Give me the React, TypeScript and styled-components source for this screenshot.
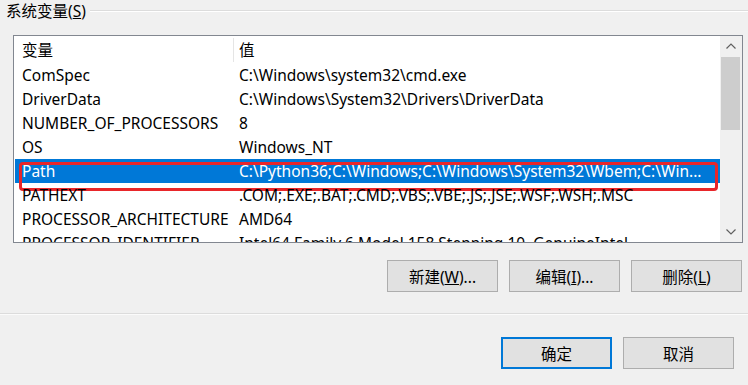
import React from 'react';
import styled, { createGlobalStyle } from 'styled-components';

const GlobalStyle = createGlobalStyle`
    html, body {
        margin: 0;
        padding: 0;
        background: #f0f0f0;
    }
    body {
        width: 748px;
        height: 385px;
        overflow: hidden;
        font-family: 'Noto Sans', 'Noto Sans CJK SC', sans-serif;
        font-size: 15.5px;
        color: #000;
    }
`;

const Dialog = styled.div`
    display: flex;
    flex-direction: column;
    width: 748px;
    height: 385px;
`;

const GroupHeader = styled.div`
    display: flex;
    align-items: center;
    height: 22px;
    padding-left: 6px;
    gap: 4px;
`;

const GroupLabel = styled.span`
    line-height: 22px;
`;

const GroupLine = styled.div`
    flex: 1;
    height: 0;
    border-top: 1px solid #dcdcdc;
    border-bottom: 1px solid #ffffff;
`;

const ListBox = styled.div`
    display: grid;
    grid-template-columns: 1fr 22px;
    margin: 13px 0 0 13px;
    width: 728px;
    height: 206px;
    border: 1px solid #828790;
    background: #fff;
    overflow: hidden;
`;

const Rows = styled.div`
    display: flex;
    flex-direction: column;
    overflow: hidden;
    padding-left: 1px;
`;

const Row = styled.div<{ $selected?: boolean; $header?: boolean }>`
    position: relative;
    display: grid;
    grid-template-columns: 218px 1fr;
    flex: 0 0 ${(p) => (p.$header ? '27px' : '24px')};
    align-items: center;
    background: ${(p) => (p.$selected ? '#0078d7' : 'transparent')};
    color: ${(p) => (p.$selected ? '#fff' : '#000')};
    white-space: nowrap;
`;

const Cell = styled.div<{ $divider?: boolean }>`
    padding-left: ${(p) => (p.$divider ? '5px' : '7px')};
    overflow: hidden;
    border-left: ${(p) => (p.$divider ? '1px solid #e5e5e5' : 'none')};
    line-height: 24px;
`;

const ValueCell = styled.div`
    padding-left: 6px;
    overflow: hidden;
    line-height: 24px;
`;

const Highlight = styled.div`
    position: absolute;
    left: 4px;
    right: 2px;
    top: 3px;
    height: 23px;
    border: 3px solid #e8262a;
    border-radius: 4px;
    pointer-events: none;
`;

const ScrollBar = styled.div`
    display: flex;
    flex-direction: column;
    background: #f0f0f0;
`;

const ScrollArrow = styled.div`
    display: flex;
    align-items: center;
    justify-content: center;
    flex: 0 0 20px;
    color: #606060;
`;

const ScrollTrack = styled.div`
    flex: 1;
    display: flex;
    flex-direction: column;
    padding: 1px 2px 0 1px;
`;

const ScrollThumb = styled.div`
    height: 73px;
    background: #cdcdcd;
`;

const ButtonRow = styled.div<{ $gap: number; $right: number; $top: number }>`
    display: flex;
    justify-content: flex-end;
    gap: ${(p) => p.$gap}px;
    padding-right: ${(p) => p.$right}px;
    margin-top: ${(p) => p.$top}px;
`;

const Button = styled.button<{ $primary?: boolean }>`
    width: 111px;
    height: 32px;
    font-family: inherit;
    font-size: 15.5px;
    color: #000;
    background: #e1e1e1;
    border: ${(p) => (p.$primary ? '2px solid #0078d7' : '1px solid #adadad')};
    padding: 0;
`;

const Key = styled.span`
    text-decoration: underline;
`;

const Separator = styled.div`
    height: 0;
    border-top: 1px solid #dcdcdc;
    border-bottom: 1px solid #fbfbfb;
    margin-top: 21px;
`;

const Chevron = ({ up }: { up?: boolean }) => (
    <svg width="10" height="6" viewBox="0 0 10 6">
        <path
            d={up ? 'M0.5 5.5 L5 1 L9.5 5.5' : 'M0.5 0.5 L5 5 L9.5 0.5'}
            fill="none"
            stroke="currentColor"
            strokeWidth="1.2"
        />
    </svg>
);

const variables = [
    ['ComSpec', 'C:\\Windows\\system32\\cmd.exe'],
    ['DriverData', 'C:\\Windows\\System32\\Drivers\\DriverData'],
    ['NUMBER_OF_PROCESSORS', '8'],
    ['OS', 'Windows_NT'],
    ['Path', 'C:\\Python36;C:\\Windows;C:\\Windows\\System32\\Wbem;C:\\Win...'],
    ['PATHEXT', '.COM;.EXE;.BAT;.CMD;.VBS;.VBE;.JS;.JSE;.WSF;.WSH;.MSC'],
    ['PROCESSOR_ARCHITECTURE', 'AMD64'],
    ['PROCESSOR_IDENTIFIER', 'Intel64 Family 6 Model 158 Stepping 10, GenuineIntel'],
];

export default function App() {
    return (
        <Dialog>
            <GlobalStyle />
            <GroupHeader>
                <GroupLabel>
                    系统变量(<Key>S</Key>)
                </GroupLabel>
                <GroupLine />
            </GroupHeader>
            <ListBox>
                <Rows>
                    <Row $header>
                        <Cell>变量</Cell>
                        <Cell $divider>值</Cell>
                    </Row>
                    {variables.map(([name, value]) => {
                        const selected = name === 'Path';
                        return (
                            <Row key={name} $selected={selected}>
                                <Cell>{name}</Cell>
                                <ValueCell>{value}</ValueCell>
                                {selected && <Highlight />}
                            </Row>
                        );
                    })}
                </Rows>
                <ScrollBar>
                    <ScrollArrow>
                        <Chevron up />
                    </ScrollArrow>
                    <ScrollTrack>
                        <ScrollThumb />
                    </ScrollTrack>
                    <ScrollArrow>
                        <Chevron />
                    </ScrollArrow>
                </ScrollBar>
            </ListBox>
            <ButtonRow $gap={11} $right={6} $top={17}>
                <Button>
                    新建(<Key>W</Key>)...
                </Button>
                <Button>
                    编辑(<Key>I</Key>)...
                </Button>
                <Button>
                    删除(<Key>L</Key>)
                </Button>
            </ButtonRow>
            <Separator />
            <ButtonRow $gap={11} $right={14} $top={22}>
                <Button $primary>确定</Button>
                <Button>取消</Button>
            </ButtonRow>
        </Dialog>
    );
}
